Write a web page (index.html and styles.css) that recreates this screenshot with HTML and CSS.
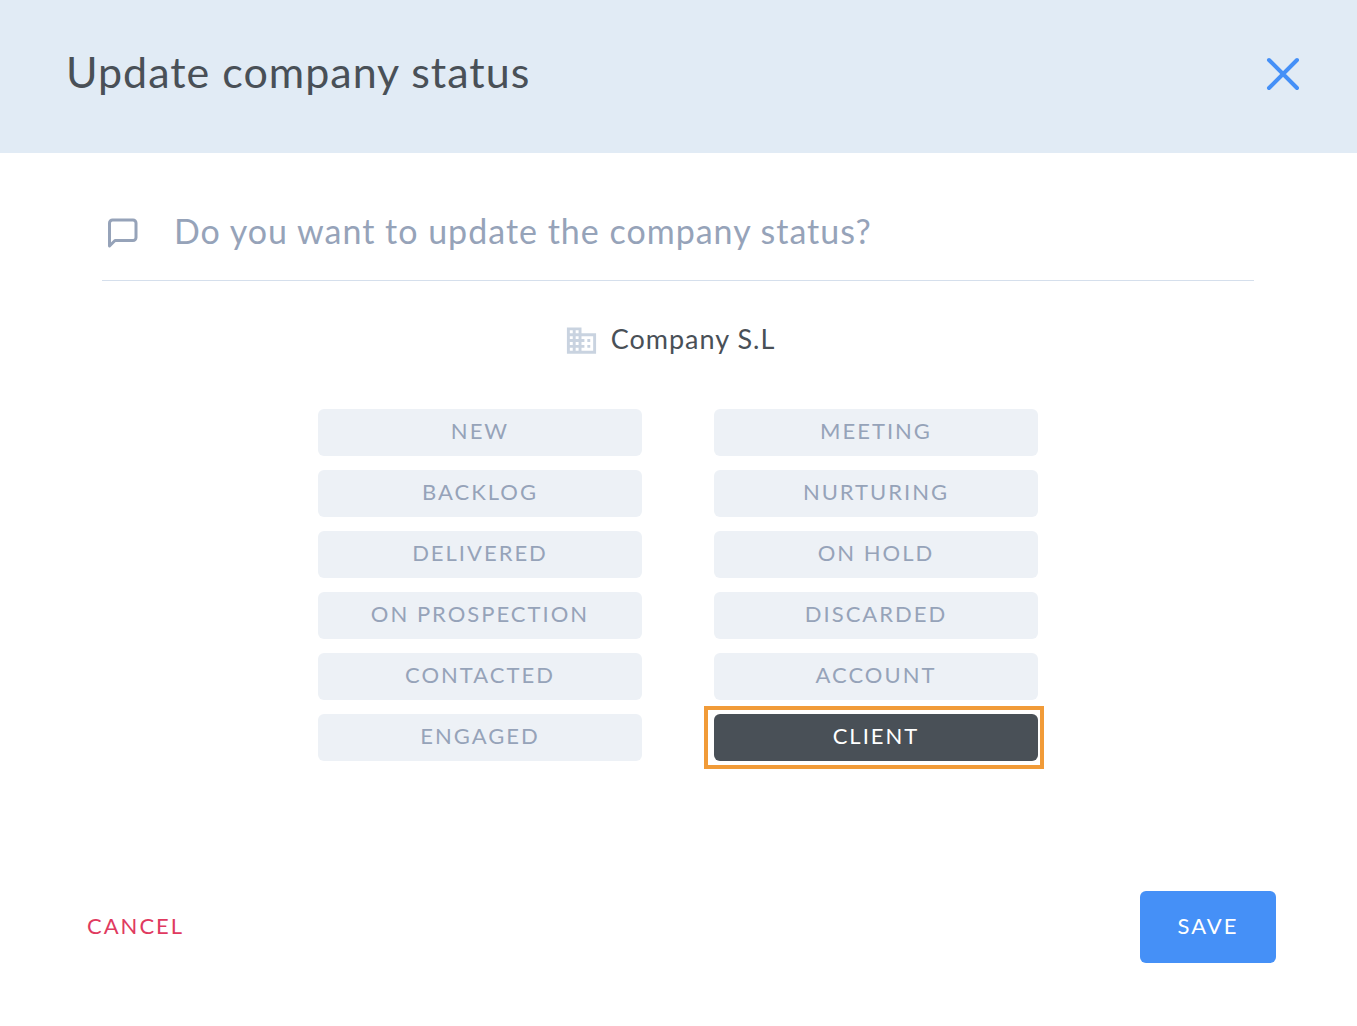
FILE: index.html
```html
<!DOCTYPE html>
<html lang="en">

<head>
  <meta charset="UTF-8" />
  <meta name="viewport" content="width=device-width, initial-scale=1" />
  <title>Update company status</title>
  <link rel="stylesheet" href="styles.css">
</head>

<body>
  <div class="modal" role="dialog" aria-labelledby="modal-title">
    <header class="modal-header">
      <h1 class="modal-title" id="modal-title">Update company status</h1>
      <button class="close" type="button" aria-label="Close">
        <svg width="34" height="34" viewBox="0 0 34 34" fill="none" stroke="currentColor" stroke-width="4" stroke-linecap="round">
          <path d="M3 3l28 28M31 3L3 31" />
        </svg>
      </button>
    </header>

    <main class="modal-body">
      <div class="question">
        <svg class="question-icon" width="32" height="32" viewBox="0 0 32 32" fill="none" stroke="currentColor" stroke-width="3" stroke-linejoin="round">
          <path d="M2.500 29V6a3 3 0 0 1 3-3h20.500a3 3 0 0 1 3 3v14.500a3 3 0 0 1-3 3H8z" />
        </svg>
        <p class="question-text">Do you want to update the company status?</p>
      </div>

      <div class="company">
        <svg class="company-icon" width="35" height="35" viewBox="0 0 24 24" fill="currentColor">
          <path d="M12 7V3H2v18h20V7H12zM6 19H4v-2h2v2zm0-4H4v-2h2v2zm0-4H4V9h2v2zm0-4H4V5h2v2zm4 12H8v-2h2v2zm0-4H8v-2h2v2zm0-4H8V9h2v2zm0-4H8V5h2v2zm10 12h-8v-2h2v-2h-2v-2h2v-2h-2V9h8v10zm-2-8h-2v2h2v-2zm0 4h-2v2h2v-2z" />
        </svg>
        <span class="company-name">Company S.L</span>
      </div>

      <div class="status-list">
        <button class="status" type="button">NEW</button>
        <button class="status" type="button">BACKLOG</button>
        <button class="status" type="button">DELIVERED</button>
        <button class="status" type="button">ON PROSPECTION</button>
        <button class="status" type="button">CONTACTED</button>
        <button class="status" type="button">ENGAGED</button>
        <button class="status" type="button">MEETING</button>
        <button class="status" type="button">NURTURING</button>
        <button class="status" type="button">ON HOLD</button>
        <button class="status" type="button">DISCARDED</button>
        <button class="status" type="button">ACCOUNT</button>
        <button class="status active" type="button" aria-pressed="true">CLIENT</button>
      </div>
    </main>

    <footer class="modal-footer">
      <button class="btn btn-cancel" type="button">CANCEL</button>
      <button class="btn btn-save" type="button">SAVE</button>
    </footer>
  </div>
</body>

</html>
```

FILE: styles.css
```css
* {
  box-sizing: border-box;
}

body {
  margin: 0;
  background-color: #fff;
  color: #495057;
  font-family: Lato, "Liberation Sans", sans-serif;
}

button {
  padding: 0;
  border: 0;
  background: none;
  font-family: inherit;
  cursor: pointer;
}

svg {
  display: block;
  flex-shrink: 0;
}

.modal {
  display: flex;
  flex-direction: column;
  min-height: 100vh;
}

/* header */
.modal-header {
  display: flex;
  align-items: center;
  justify-content: space-between;
  padding: 44px 57px 49px 66px;
  background-color: #e1ebf5;
}

.modal-title {
  margin: 0;
  padding-bottom: 4px;
  font-size: 43px;
  font-weight: 400;
  line-height: 56px;
  letter-spacing: 1px;
}

.close {
  color: #4590f7;
}

/* body */
.modal-body {
  flex: 1;
  padding: 56px 103px 0 102px;
}

.question {
  display: flex;
  align-items: center;
  gap: 35px;
  padding: 0 5px 23px;
  border-bottom: 1px solid #d5dfec;
  color: #96a3b9;
}

.question-text {
  margin: 0;
  padding-bottom: 4px;
  font-size: 34px;
  line-height: 44px;
  letter-spacing: 1px;
}

.company {
  display: flex;
  align-items: center;
  justify-content: center;
  gap: 12px;
  margin: 41px 0 51px;
  padding-right: 17px;
}

.company-icon {
  color: #c9d3e0;
}

.company-name {
  padding-bottom: 2px;
  font-size: 27px;
  line-height: 34px;
  letter-spacing: 1px;
}

.status-list {
  display: grid;
  grid-template-rows: repeat(6, auto);
  grid-auto-flow: column;
  grid-auto-columns: 1fr;
  gap: 14px 72px;
  max-width: 720px;
  margin: 0 auto;
}

.status {
  padding: 7px 0 10px;
  border-radius: 6px;
  background-color: #edf1f6;
  color: #96a3b9;
  font-size: 22px;
  line-height: 30px;
  letter-spacing: 2px;
}

.status.active {
  position: relative;
  background-color: #495057;
  color: #fff;
}

/* square frame around the selected status */
.status.active::after {
  content: "";
  position: absolute;
  top: -8px;
  right: -6px;
  bottom: -8px;
  left: -10px;
  border: 4px solid #f19b38;
}

/* footer */
.modal-footer {
  display: flex;
  align-items: center;
  justify-content: space-between;
  padding: 0 81px 63px 87px;
}

.btn {
  padding-bottom: 2px;
  font-size: 22px;
  line-height: 70px;
  letter-spacing: 2px;
}

.btn-cancel {
  color: #e03a5f;
}

.btn-save {
  min-width: 136px;
  border-radius: 6px;
  background-color: #4590f7;
  color: #fff;
}
```
